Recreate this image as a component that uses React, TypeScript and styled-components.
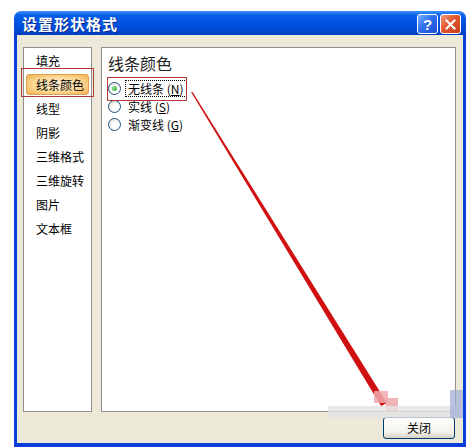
import React from 'react';
import styled, { createGlobalStyle } from 'styled-components';

const GlobalStyle = createGlobalStyle`
  html, body {
    margin: 0;
    padding: 0;
    background: #ffffff;
    font-family: "Noto Sans CJK SC", "Liberation Sans", sans-serif;
  }
`;

const Page = styled.div`
  position: relative;
  width: 470px;
  height: 447px;
  padding: 11px 0 0 14px;
  box-sizing: border-box;
  overflow: hidden;
`;

const Window = styled.div`
  width: 452px;
  height: 436px;
  display: flex;
  flex-direction: column;
  box-sizing: border-box;
`;

const TitleBar = styled.div`
  height: 24px;
  border-radius: 7px 7px 0 0;
  background: linear-gradient(180deg, #3d95ff 0%, #0a5fe8 18%, #0054e3 50%, #0048d0 85%, #003fc0 100%);
  display: flex;
  align-items: center;
  padding: 0 5px 0 8px;
  gap: 2px;
`;

const Title = styled.div`
  flex: 1;
  color: #ffffff;
  font-size: 15px;
  font-weight: bold;
  letter-spacing: 1px;
  text-shadow: 1px 1px 0 #0a2a8c;
`;

const CaptionButton = styled.div<{ kind: 'help' | 'close' }>`
  width: 21px;
  height: 20px;
  margin-top: 2px;
  border: 1px solid #ffffff;
  border-radius: 3px;
  box-sizing: border-box;
  display: flex;
  align-items: center;
  justify-content: center;
  color: #ffffff;
  font-family: "Liberation Sans", sans-serif;
  font-weight: bold;
  font-size: 15px;
  background: ${p => p.kind === 'close'
    ? 'linear-gradient(135deg, #f09a7c 0%, #e2582f 45%, #c43c1c 100%)'
    : 'linear-gradient(135deg, #7fb0ff 0%, #2f6ff0 45%, #1d4fd0 100%)'};
`;

const Body = styled.div`
  flex: 1;
  background: #ece9d8;
  border-style: solid;
  border-color: #0a3ed8;
  border-width: 0 3px 4px 3px;
  display: flex;
  flex-direction: column;
  padding: 12px 7px 0 6px;
  box-sizing: border-box;
`;

const Panels = styled.div`
  display: flex;
  gap: 9px;
  height: 365px;
`;

const NavPanel = styled.div`
  width: 69px;
  background: #ffffff;
  border: 1px solid #8e8f8f;
  box-sizing: border-box;
  display: flex;
  flex-direction: column;
  padding: 2px 2px;
  gap: 3px;
`;

const NavItem = styled.div<{ selected?: boolean }>`
  height: 21px;
  display: flex;
  align-items: center;
  padding-left: 10px;
  font-size: 12px;
  color: #000000;
  border-radius: 3px;
  box-sizing: border-box;
  ${p => p.selected && `
    background: radial-gradient(ellipse at 50% 50%, #fff3d8 0%, #fcd896 55%, #f5b350 100%);
    border: 1px solid #e0a050;
    padding-left: 9px;
  `}
`;

const Annotation = styled.div<{ top: number; left: number; width: number; height: number }>`
  position: absolute;
  top: ${p => p.top}px;
  left: ${p => p.left}px;
  width: ${p => p.width}px;
  height: ${p => p.height}px;
  border: 1px solid #b23a3a;
  box-sizing: border-box;
  pointer-events: none;
`;

const ContentPanel = styled.div`
  flex: 1;
  background: #ffffff;
  border: 1px solid #8e8f8f;
  box-sizing: border-box;
  padding: 4px 6px;
  display: flex;
  flex-direction: column;
`;

const Heading = styled.div`
  font-size: 16px;
  color: #222222;
  line-height: 22px;
  margin-bottom: 5px;
`;

const RadioRow = styled.div`
  display: flex;
  align-items: center;
  gap: 4px;
  height: 18px;
  font-size: 12px;
  color: #000000;
`;

const RadioCircle = styled.span<{ checked?: boolean }>`
  width: 13px;
  height: 13px;
  border-radius: 50%;
  border: 1px solid #1c5180;
  box-sizing: border-box;
  background: radial-gradient(circle at 65% 65%, #ffffff 30%, #dcdcd6 100%);
  display: flex;
  align-items: center;
  justify-content: center;
  &::after {
    content: '';
    display: ${p => (p.checked ? 'block' : 'none')};
    width: 5px;
    height: 5px;
    border-radius: 50%;
    background: radial-gradient(circle at 35% 35%, #8fe38f, #21a121);
  }
`;

const RadioLabel = styled.span<{ focused?: boolean }>`
  padding: 0 2px;
  border: 1px dotted ${p => (p.focused ? '#000000' : 'transparent')};
  line-height: 15px;
  u {
    text-decoration: underline;
  }
`;

const Footer = styled.div`
  flex: 1;
  display: flex;
  justify-content: flex-end;
  align-items: center;
  padding-right: 1px;
`;

const Button = styled.div`
  width: 72px;
  height: 22px;
  border: 1px solid #003c74;
  border-radius: 3px;
  box-sizing: border-box;
  background: linear-gradient(180deg, #ffffff 0%, #f3f2ec 70%, #d6d0c5 100%);
  display: flex;
  align-items: center;
  justify-content: center;
  font-size: 12px;
  color: #000000;
`;

const Overlay = styled.svg`
  position: absolute;
  top: 0;
  left: 0;
  pointer-events: none;
`;

const Watermark = styled.div<{ top: number; left: number; width: number; height: number; color: string }>`
  position: absolute;
  top: ${p => p.top}px;
  left: ${p => p.left}px;
  width: ${p => p.width}px;
  height: ${p => p.height}px;
  background: ${p => p.color};
  pointer-events: none;
`;

const navItems = ['填充', '线条颜色', '线型', '阴影', '三维格式', '三维旋转', '图片', '文本框'];

const options = [
  { label: '无线条', key: 'N', checked: true },
  { label: '实线', key: 'S' },
  { label: '渐变线', key: 'G' },
];

export default function App() {
  return (
    <>
      <GlobalStyle />
      <Page>
        <Window>
          <TitleBar>
            <Title>设置形状格式</Title>
            <CaptionButton kind="help">?</CaptionButton>
            <CaptionButton kind="close">
              <svg width="11" height="11" viewBox="0 0 11 11">
                <path d="M1.5 1.5 L9.5 9.5 M9.5 1.5 L1.5 9.5" stroke="#fff" strokeWidth="2" strokeLinecap="square" />
              </svg>
            </CaptionButton>
          </TitleBar>
          <Body>
            <Panels>
              <NavPanel>
                {navItems.map(item => (
                  <NavItem key={item} selected={item === '线条颜色'}>{item}</NavItem>
                ))}
              </NavPanel>
              <ContentPanel>
                <Heading>线条颜色</Heading>
                {options.map(o => (
                  <RadioRow key={o.key}>
                    <RadioCircle checked={o.checked} />
                    <RadioLabel focused={o.checked}>
                      {o.label} (<u>{o.key}</u>)
                    </RadioLabel>
                  </RadioRow>
                ))}
              </ContentPanel>
            </Panels>
            <Footer>
              <Button>关闭</Button>
            </Footer>
          </Body>
        </Window>

        <Annotation top={68} left={21} width={73} height={29} />
        <Annotation top={77} left={107} width={80} height={24} />

        <Overlay width="470" height="447" viewBox="0 0 470 447">
          <polygon points="191,92 192.5,92 387,403 381,406" fill="#d01010" />
        </Overlay>

        <Watermark top={391} left={374} width={14} height={12} color="rgba(240,170,175,0.85)" />
        <Watermark top={398} left={386} width={12} height={14} color="rgba(235,160,165,0.8)" />
        <Watermark top={406} left={328} width={135} height={12} color="rgba(228,228,228,0.8)" />
        <Watermark top={390} left={450} width={13} height={28} color="rgba(165,175,215,0.75)" />
      </Page>
    </>
  );
}
